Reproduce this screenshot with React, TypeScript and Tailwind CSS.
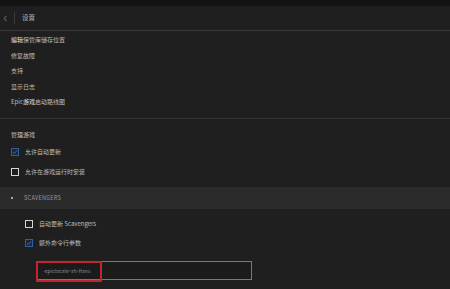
import React from "react";

const font = { fontFamily: '"Noto Sans CJK SC", "Noto Sans", sans-serif' };

function Checkbox({ checked }: { checked?: boolean }) {
  return checked ? (
    <span className="flex h-[8px] w-[8px] items-center justify-center border border-[#2f5fa3] bg-[#1c2838]">
      <svg viewBox="0 0 8 8" className="h-[6px] w-[6px]">
        <path d="M1.2 4.2 L3.2 6 L6.8 1.8" fill="none" stroke="#4d7fc4" strokeWidth="1" />
      </svg>
    </span>
  ) : (
    <span className="h-[8px] w-[8px] border border-[#d6d6d6]" />
  );
}

function CheckRow({ label, checked }: { label: string; checked?: boolean }) {
  return (
    <div className="flex items-center gap-[6px]">
      <Checkbox checked={checked} />
      <span className="text-[6px] text-[#bdbdbd]">{label}</span>
    </div>
  );
}

export default function App() {
  return (
    <div className="h-[289px] w-[450px] overflow-hidden bg-[#1f1f1f]" style={font}>
      <div className="h-[6px] bg-[#131313]" />
      <header className="flex h-[25px] items-center border-b border-[#383838]">
        <svg viewBox="0 0 6 8" className="ml-[3px] h-[7px] w-[5px]">
          <path d="M4 1 L1.5 4 L4 7" fill="none" stroke="#8a8a8a" strokeWidth="1" />
        </svg>
        <span className="ml-[6px] h-[12px] w-px bg-[#3a3a3a]" />
        <span className="ml-[7px] text-[6.5px] text-[#b5b5b5]">设置</span>
      </header>

      <div className="flex flex-col gap-[6.5px] px-[11px] pt-[4px] text-[6px] text-[#bdbdbd]">
        <div className="leading-[9px]"><span className="text-[#e6e6e6]">编辑</span>保管库储存位置</div>
        <div className="leading-[9px]">修复故障</div>
        <div className="leading-[9px]">支持</div>
        <div className="leading-[9px]">显示日志</div>
        <div className="leading-[9px]">Epic<span className="text-[#e6e6e6]">游戏</span>启动路线图</div>
      </div>

      <div className="mt-[12px] border-b border-[#333333]" />

      <div className="px-[11px] pt-[11px]">
        <div className="text-[6px] leading-[9px] text-[#c4c4c4]">管理游戏</div>
        <div className="mt-[8px] flex flex-col gap-[11px]">
          <CheckRow label="允许自动更新" checked />
          <CheckRow label="允许在游戏运行时安装" />
        </div>
      </div>

      <div className="mt-[11px] flex h-[22px] items-center bg-[#2b2b2b] px-[11px]">
        <span className="h-[2px] w-[2px] rounded-full bg-[#d0d0d0]" />
        <span className="ml-[11px] text-[5.5px] tracking-[0.3px] text-[#9a9a9a]">SCAVENGERS</span>
      </div>

      <div className="px-[25px] pt-[10px]">
        <div className="flex flex-col gap-[10px]">
          <CheckRow label="自动更新 Scavengers" />
          <CheckRow label="额外命令行参数" checked />
        </div>
        <div className="relative ml-[11px] mt-[14px] flex h-[19px] w-[216px] items-center border border-[#7a7a7a] bg-[#1b1b1b] px-[6px]">
          <span className="text-[5px] text-[#8c8c8c]">-epiclocale=zh-Hans</span>
          <span className="absolute -left-px -top-px h-[21px] w-[66px] rounded-[1px] border-2 border-[#c0262d]" />
        </div>
      </div>
    </div>
  );
}
